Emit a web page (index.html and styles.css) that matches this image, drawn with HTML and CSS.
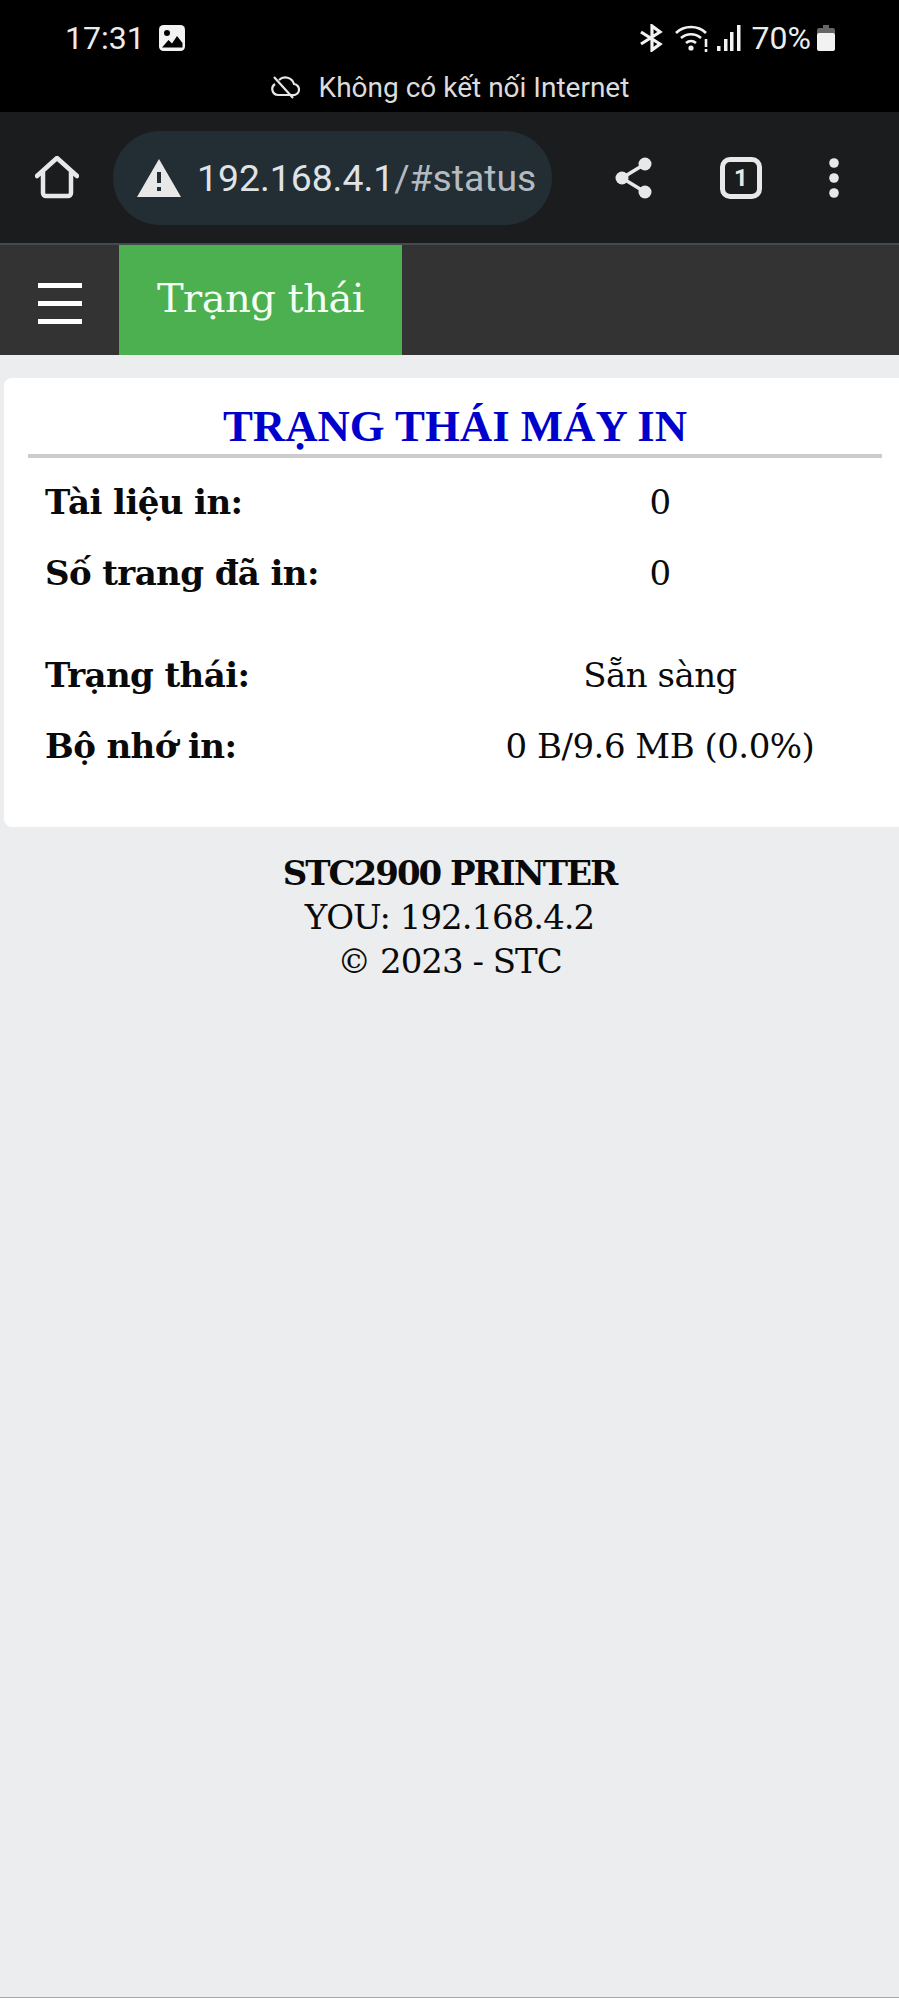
FILE: index.html
```html
<!DOCTYPE html>
<html lang="vi">
<head>
<meta charset="utf-8">
<title>Trạng thái</title>
<link rel="stylesheet" href="styles.css">
</head>
<body>
<header class="system">
  <div class="status">
    <div class="status-left">
      <span class="clock">17:31</span>
      <svg class="ic-gallery" viewBox="0 0 26 26"><rect width="26" height="26" rx="4.500" fill="#f2f2f2"/><circle cx="8" cy="8" r="3" fill="#000"/><path fill="#000" d="M3 22.500l6.500-7.500 3.500 3.500L18 11l5.500 7v4.500z"/></svg>
    </div>
    <div class="status-right">
      <svg class="ic-bt" viewBox="0 0 24 28" fill="none" stroke="#f2f2f2" stroke-width="3.200"><path d="M2 8l19 12-8 6V2l8 6L2 20"/></svg>
      <svg class="ic-wifi" viewBox="0 0 34 28" fill="none" stroke="#f2f2f2" stroke-width="2.600"><path d="M1 9c8-8 22-8 30 0M6 14c6-5 14-5 20 0M11 19c3-2.500 7-2.500 10 0"/><circle cx="16" cy="24" r="2.600" fill="#f2f2f2" stroke="none"/><path d="M31 15v8M31 25v3"/></svg>
      <svg class="ic-signal" viewBox="0 0 24 28" fill="#f2f2f2"><rect x="0" y="22" width="3.500" height="5"/><rect x="7" y="15" width="3.500" height="12"/><rect x="13" y="8" width="3.500" height="19"/><rect x="20" y="1" width="3.500" height="26"/></svg>
      <span class="pct">70%</span>
      <svg class="ic-batt" viewBox="0 0 18 26"><path fill="#666" d="M6 0h6v3h4a2 2 0 0 1 2 2v4H0V5a2 2 0 0 1 2-2h4z"/><rect y="8" width="18" height="18" rx="2" fill="#f2f2f2"/></svg>
    </div>
  </div>
  <div class="offline">
    <svg class="ic-cloud" viewBox="0 0 30 24" fill="none" stroke="#e6e6e6" stroke-width="2.200"><path d="M8 20h15a5.500 5.500 0 0 0 1-11 9 9 0 0 0-15-4M5 9a6 6 0 0 0 3 11M4 2l19 21"/></svg>
    <span>Không có kết nối Internet</span>
  </div>
</header>

<div class="toolbar">
  <svg class="ic-home" viewBox="0 0 44 44" fill="none" stroke="#e8e8e8" stroke-width="4.500" stroke-linejoin="round" stroke-linecap="round"><path d="M2 20L22 2l20 18M8 16v21a3 3 0 0 0 3 3h22a3 3 0 0 0 3-3V16"/></svg>
  <div class="omnibox">
    <svg class="ic-warn" viewBox="0 0 44 38"><path fill="#e8e8e8" d="M22 0l22 38H0z"/><rect x="20" y="13" width="4" height="11" fill="#222d34"/><rect x="20" y="28" width="4" height="4" fill="#222d34"/></svg>
    <span class="url"><span class="host">192.168.4.1</span>/#status</span>
  </div>
  <svg class="ic-share" viewBox="0 0 38 42" fill="#e8e8e8"><circle cx="30" cy="7" r="6.500"/><circle cx="7" cy="21" r="6.500"/><circle cx="30" cy="35" r="6.500"/><path d="M30 7L7 21l23 14" fill="none" stroke="#e8e8e8" stroke-width="3.500"/></svg>
  <div class="tabs">1</div>
  <svg class="ic-more" viewBox="0 0 10 40" fill="#e8e8e8"><circle cx="5" cy="5" r="4.800"/><circle cx="5" cy="20" r="4.800"/><circle cx="5" cy="35" r="4.800"/></svg>
</div>

<nav class="topnav">
  <div class="burger"><i></i><i></i><i></i></div>
  <a class="tab-active">Trạng thái</a>
</nav>

<main class="page">
  <section class="card">
    <h1 class="title">TRẠNG THÁI MÁY IN</h1>
    <div class="rows first">
      <div class="row"><b>Tài liệu in:</b><span>0</span></div>
      <div class="row"><b>Số trang đã in:</b><span>0</span></div>
    </div>
    <div class="rows">
      <div class="row"><b>Trạng thái:</b><span>Sẵn sàng</span></div>
      <div class="row"><b>Bộ nhớ in:</b><span>0 B/9.6 MB (0.0%)</span></div>
    </div>
  </section>
  <footer class="foot">
    <b>STC2900 PRINTER</b>
    <div>YOU: 192.168.4.2</div>
    <div>© 2023 - STC</div>
  </footer>
</main>
</body>
</html>
```
FILE: styles.css
```css
* { box-sizing: border-box; }
html, body { margin: 0; height: 100%; }
body {
  width: 899px;
  height: 1998px;
  overflow: hidden;
  display: flex;
  flex-direction: column;
  background: #ebedef;
  font-family: "DejaVu Serif", serif;
}
svg { display: block; flex: none; }

.system {
  height: 112px;
  background: #000;
  color: #ececec;
  font-family: Roboto, sans-serif;
  padding-top: 19px;
}
.status {
  display: flex;
  justify-content: space-between;
  padding: 0 64px 0 65px;
  height: 38px;
  align-items: center;
}
.status-left, .status-right { display: flex; align-items: center; }
.clock { font-size: 32px; margin-right: 14px; }
.ic-gallery { width: 26px; height: 26px; }
.ic-bt { width: 24px; height: 28px; margin-right: 12px; }
.ic-wifi { width: 34px; height: 28px; margin-right: 8px; }
.ic-signal { width: 24px; height: 28px; margin-right: 11px; }
.pct { font-size: 32px; margin-right: 6px; }
.ic-batt { width: 18px; height: 26px; }
.offline {
  display: flex;
  justify-content: center;
  align-items: center;
  gap: 19px;
  font-size: 28px;
  color: #dcdcdc;
  height: 40px;
  margin-top: 10px;
}
.ic-cloud { width: 30px; height: 24px; }

.toolbar {
  height: 131px;
  background: #1b1c1e;
  display: flex;
  align-items: center;
  padding: 0 0 0 35px;
}
.ic-home { width: 44px; height: 44px; margin-right: 34px; }
.omnibox {
  width: 439px;
  height: 94px;
  border-radius: 47px;
  background: #222d34;
  display: flex;
  align-items: center;
  padding-left: 24px;
  gap: 16px;
}
.ic-warn { width: 44px; height: 38px; }
.url { font-family: Roboto, sans-serif; font-size: 37.300px; color: #b4bbc0; white-space: nowrap; }
.host { color: #dfe3e6; }
.ic-share { width: 38px; height: 42px; margin-left: 63px; }
.tabs {
  width: 42px;
  height: 42px;
  margin-left: 67px;
  border: 5px solid #e8e8e8;
  border-radius: 10px;
  color: #e8e8e8;
  font: 700 24px/32px Roboto, sans-serif;
  text-align: center;
}
.ic-more { width: 10px; height: 40px; margin-left: 67px; }

.topnav {
  height: 112px;
  background: #333;
  border-top: 2px solid #454a4e;
  display: flex;
}
.burger {
  width: 119px;
  display: flex;
  flex-direction: column;
  justify-content: center;
  gap: 13px;
  padding: 6px 0 0 38px;
}
.burger i { display: block; width: 44px; height: 5px; background: #fff; }
.tab-active {
  width: 283px;
  background: #4caf50;
  color: #f4fff4;
  font-size: 40px;
  letter-spacing: -0.5px;
  line-height: 106px;
  text-align: center;
}

.page { flex: 1; padding: 23px 0 0 4px; border-bottom: 1px solid #a8a8a8; }
.card {
  height: 449px;
  background: #fff;
  border-radius: 8px 0 0 8px;
  padding: 22px 17px 0 24px;
}
.title {
  margin: 0;
  height: 58px;
  border-bottom: 4px solid #ccc;
  color: #0000cd;
  font: 700 44.800px/53px "Liberation Serif", serif;
  text-align: center;
}
.rows.first { padding-top: 8px; padding-bottom: 31px; }
.row {
  display: grid;
  grid-template-columns: 393px 1fr;
  height: 71px;
  align-items: center;
  font-size: 34px;
  letter-spacing: -0.5px;
  color: #0a0a0a;
  padding-left: 17px;
}
.row b { letter-spacing: -0.6px; }
.row span { text-align: center; }
.foot {
  padding-top: 24px;
  margin-left: -4px;
  text-align: center;
  font-size: 34px;
  letter-spacing: -1px;
  line-height: 44px;
  color: #0a0a0a;
}
.foot b { display: block; letter-spacing: -2px; }
```
